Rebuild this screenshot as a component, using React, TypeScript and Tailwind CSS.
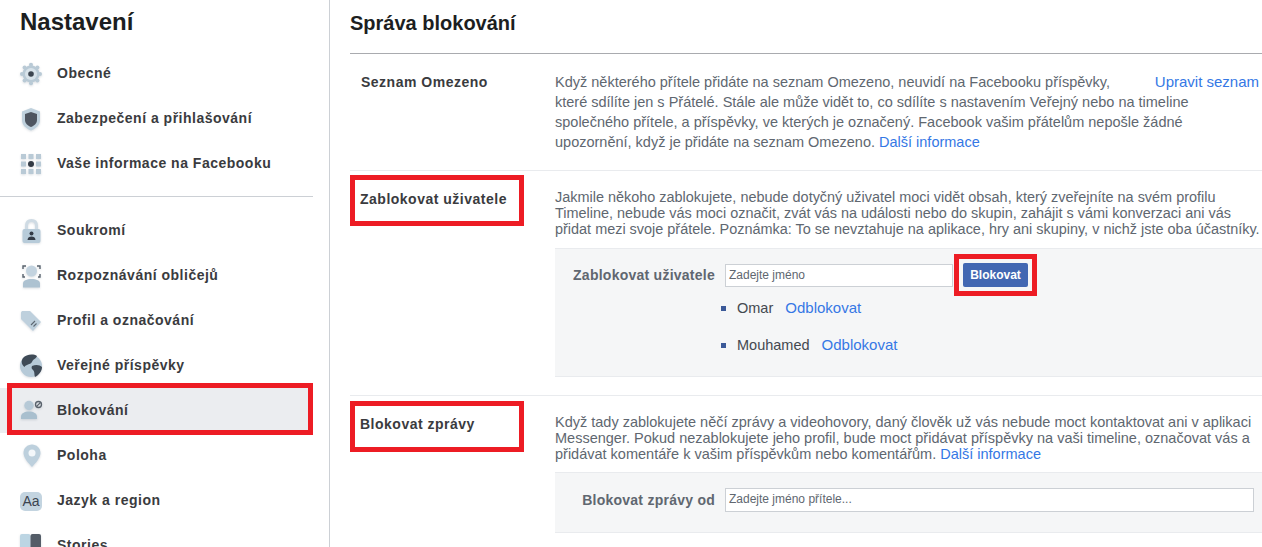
import type { ReactNode } from "react"

function Icon({ children }: { children: ReactNode }) {
  return (
    <svg width="26" height="26" viewBox="0 0 26 26" className="shrink-0 drop-shadow-[0_1px_1px_rgba(70,90,110,0.2)]">
      {children}
    </svg>
  )
}

const GearIcon = () => (
  <Icon>
    <g fill="#b9cad6">
      <circle cx="13" cy="13" r="8.5" />
      <circle cx="13" cy="3.8" r="2" />
      <circle cx="13" cy="22.2" r="2" />
      <circle cx="4" cy="13" r="2" />
      <circle cx="22" cy="13" r="2" />
      <circle cx="6.6" cy="6.6" r="2" />
      <circle cx="19.4" cy="6.6" r="2" />
      <circle cx="6.6" cy="19.4" r="2" />
      <circle cx="19.4" cy="19.4" r="2" />
    </g>
    <circle cx="13" cy="13" r="6" fill="#d8e3ea" />
    <circle cx="13" cy="13" r="2.8" fill="#3c4550" />
  </Icon>
)

const ShieldIcon = () => (
  <Icon>
    <path d="M13 2 L22 5.5 V14 C22 19 18 22.5 13 24.5 C8 22.5 4 19 4 14 V5.5 Z" fill="#bfd1dd" />
    <path d="M13 6 L19 8 V14 C19 17.5 16.5 19.5 13 21 C9.5 19.5 7 17.5 7 14 V8 Z" fill="#4e5560" />
  </Icon>
)

const GridIcon = () => (
  <Icon>
    <g fill="#b9cad6">
      <rect x="3" y="3" width="5" height="5" />
      <rect x="10.5" y="3" width="5" height="5" />
      <rect x="18" y="3" width="5" height="5" />
      <rect x="3" y="10.5" width="5" height="5" />
      <rect x="18" y="10.5" width="5" height="5" />
      <rect x="3" y="18" width="5" height="5" />
      <rect x="10.5" y="18" width="5" height="5" />
      <rect x="18" y="18" width="5" height="5" />
    </g>
    <circle cx="13" cy="13" r="3" fill="#343b45" />
  </Icon>
)

const LockIcon = () => (
  <Icon>
    <path d="M8.5 12 V8 C8.5 4.5 10.5 2.5 13.5 2.5 C16.5 2.5 18.5 4.5 18.5 8 V12" fill="none" stroke="#cfdbe4" strokeWidth="3" />
    <rect x="4.5" y="11" width="18" height="14" rx="2" fill="#b7cbd9" />
    <circle cx="13.5" cy="15.5" r="2" fill="#333b46" />
    <path d="M9.5 22 C9.5 19.5 11.5 18.5 13.5 18.5 C15.5 18.5 17.5 19.5 17.5 22 Z" fill="#333b46" />
  </Icon>
)

const FaceIcon = () => (
  <Icon>
    <circle cx="13.5" cy="8" r="5.5" fill="#c3d3df" />
    <path d="M5 24.5 V20.5 C5 17.5 8.5 16 13.5 16 C18.5 16 22 17.5 22 20.5 V24.5 Z" fill="#adc2d1" />
    <path d="M5 6 V3 H8 M19 3 H22 V6 M5 11 V14 H7 M22 11 V14 H20" fill="none" stroke="#59636e" strokeWidth="1.4" />
  </Icon>
)

const TagIcon = () => (
  <Icon>
    <path d="M3 5 C3 3.5 4 3 5 3 H12 L23 14 L15 23 L3 11 Z" fill="#bed0dd" />
    <path d="M13 17 L17 13 M15.5 18.5 L18.5 15.5" stroke="#5d6873" strokeWidth="1.1" />
  </Icon>
)

const GlobeIcon = () => (
  <Icon>
    <circle cx="13" cy="13" r="11" fill="#b6cad8" />
    <path d="M5 5 C8 1.5 15 0.5 19 3 C18 6 15 6 14 9 C12 12 8 11 6.5 14 C4 12 2.5 9 5 5 Z" fill="#3f4b57" />
    <path d="M14 13 C18 11 22 12 24 14 C24 18 21 22 17 24 C16 21 17 19 15 17 C14 16 13 15 14 13 Z" fill="#3f4b57" />
  </Icon>
)

const BlockIcon = () => (
  <Icon>
    <circle cx="11" cy="7.5" r="4.7" fill="#b6c9d7" />
    <path d="M3 21 V18.5 C3 15.5 6.5 13.5 11 13.5 C15.5 13.5 19 15.5 19 18.5 V21 Z" fill="#a9bfce" />
    <circle cx="20.5" cy="6.5" r="3" fill="none" stroke="#59626c" strokeWidth="1.3" />
    <path d="M18.4 8.6 L22.6 4.4" stroke="#59626c" strokeWidth="1.3" />
  </Icon>
)

const PinIcon = () => (
  <Icon>
    <path d="M14 24 C10.5 20 5.5 15 5.5 10 C5.5 5 9.5 1.5 14 1.5 C18.5 1.5 22.5 5 22.5 10 C22.5 15 17.5 20 14 24 Z" fill="#bdd0dd" />
    <circle cx="14" cy="10" r="3.5" fill="#f3f7fa" />
  </Icon>
)

const LangIcon = () => (
  <div className="flex items-start w-[26px] h-[26px] shrink-0 pt-[4px] pl-[2px]">
    <div className="w-[22px] h-[19px] rounded-[5px] bg-[#c3d4e0] text-[#3b4450] text-[14px] leading-[18px] text-center">Aa</div>
  </div>
)

const BookIcon = () => (
  <Icon>
    <rect x="2" y="1" width="10.5" height="25" rx="2" fill="#bcd5e3" />
    <rect x="12.5" y="1" width="10.5" height="25" rx="2" fill="#545d68" />
  </Icon>
)

function NavItem({ icon, label }: { icon: ReactNode; label: string }) {
  return (
    <div className="flex items-center h-[45px] pl-[18px] gap-[13px]">
      {icon}
      <span className="text-[14px] font-bold tracking-[0.5px] text-[#3a3b3e]">{label}</span>
    </div>
  )
}

function Link({ children }: { children: ReactNode }) {
  return <a className="text-[#3578e5]">{children}</a>
}

// red annotation frames drawn over the page
function Frame({ className }: { className: string }) {
  return <div className={`absolute border-[5px] border-[#ed1c24] pointer-events-none ${className}`} />
}

export default function App() {
  return (
    <div className="relative flex h-[547px] w-[1262px] overflow-hidden bg-white font-['Liberation_Sans',Arial,sans-serif]">
      <aside className="w-[330px] shrink-0 border-r border-[#ccd0d5]">
        <h1 className="pl-[20px] pt-[7px] h-[51px] text-[24px] leading-[30px] font-bold text-[#1c1e21]">Nastavení</h1>
        <NavItem icon={<GearIcon />} label="Obecné" />
        <NavItem icon={<ShieldIcon />} label="Zabezpečení a přihlašování" />
        <NavItem icon={<GridIcon />} label="Vaše informace na Facebooku" />
        <div className="mt-[10px] mb-[11px] mr-[16px] border-t border-[#ccd0d5]" />
        <NavItem icon={<LockIcon />} label="Soukromí" />
        <NavItem icon={<FaceIcon />} label="Rozpoznávání obličejů" />
        <NavItem icon={<TagIcon />} label="Profil a označování" />
        <NavItem icon={<GlobeIcon />} label="Veřejné příspěvky" />
        <div className="bg-[#ebedf0] mr-[16px]">
          <NavItem icon={<BlockIcon />} label="Blokování" />
        </div>
        <NavItem icon={<PinIcon />} label="Poloha" />
        <NavItem icon={<LangIcon />} label="Jazyk a region" />
        <NavItem icon={<BookIcon />} label="Stories" />
      </aside>

      <main className="flex-1 pl-[20px] min-w-0">
        <h2 className="h-[54px] pt-[9px] text-[20px] leading-[28px] font-bold text-[#1c1e21] border-b border-[#a9abaf]">Správa blokování</h2>

        <section className="flex h-[117px] border-b border-[#e9ebee] pt-[18px]">
          <h3 className="w-[205px] shrink-0 pl-[11px] text-[14px] leading-[20px] font-bold tracking-[0.5px] text-[#3a3b3e]">Seznam Omezeno</h3>
          <div className="relative flex-1 text-[14.5px] leading-[20px] text-[#606770]">
            <span className="absolute right-[3px] top-0 text-[15px]"><Link>Upravit seznam</Link></span>
            <p className="whitespace-nowrap">
              Když některého přítele přidáte na seznam Omezeno, neuvidí na Facebooku příspěvky,<br />
              které sdílíte jen s Přátelé. Stále ale může vidět to, co sdílíte s nastavením Veřejný nebo na timeline<br />
              společného přítele, a příspěvky, ve kterých je označený. Facebook vašim přátelům nepošle žádné<br />
              upozornění, když je přidáte na seznam Omezeno. <Link>Další informace</Link>
            </p>
          </div>
        </section>

        <section className="flex h-[225px] border-b border-[#e9ebee] pt-[18px]">
          <h3 className="w-[205px] shrink-0 pl-[10px] text-[14px] leading-[20px] font-bold tracking-[0.5px] text-[#3a3b3e]">Zablokovat uživatele</h3>
          <div className="flex-1 min-w-0">
            <p className="text-[14.45px] leading-[16px] text-[#606770] whitespace-nowrap">
              Jakmile někoho zablokujete, nebude dotyčný uživatel moci vidět obsah, který zveřejníte na svém profilu<br />
              Timeline, nebude vás moci označit, zvát vás na události nebo do skupin, zahájit s vámi konverzaci ani vás<br />
              přidat mezi svoje přátele. Poznámka: To se nevztahuje na aplikace, hry ani skupiny, v nichž jste oba účastníky.
            </p>
            <div className="mt-[11px] h-[129px] bg-[#f5f6f7] border-y border-[#e9ebee] pt-[14px]">
              <div className="flex items-center h-[24px]">
                <span className="w-[170px] pr-[10px] text-right text-[14px] font-bold tracking-[0.25px] text-[#606770]">Zablokovat uživatele</span>
                <div className="w-[228px] h-[23px] bg-white border border-[#ccd0d5] pl-[3px] text-[12px] leading-[20px] text-[#606770]">Zadejte jméno</div>
                <button className="ml-[10px] h-[24px] w-[65px] bg-[#4267b2] rounded-[2px] text-white text-[12px] font-bold">Blokovat</button>
              </div>
              <ul className="mt-[11px] ml-[166px] text-[14.5px] leading-[20px]">
                <li className="flex items-center h-[20px] gap-[11px] text-[#444950]">
                  <span className="w-[5px] h-[5px] bg-[#3b5998]" />
                  <span>Omar <span className="ml-[8px] text-[15px]"><Link>Odblokovat</Link></span></span>
                </li>
                <li className="flex items-center h-[20px] gap-[11px] mt-[17px] text-[#444950]">
                  <span className="w-[5px] h-[5px] bg-[#3b5998]" />
                  <span>Mouhamed <span className="ml-[8px] text-[15px]"><Link>Odblokovat</Link></span></span>
                </li>
              </ul>
            </div>
          </div>
        </section>

        <section className="flex pt-[18px]">
          <h3 className="w-[205px] shrink-0 pl-[10px] text-[14px] leading-[20px] font-bold tracking-[0.5px] text-[#3a3b3e]">Blokovat zprávy</h3>
          <div className="flex-1 min-w-0">
            <p className="text-[14.5px] leading-[16px] text-[#606770] whitespace-nowrap">
              Když tady zablokujete něčí zprávy a videohovory, daný člověk už vás nebude moct kontaktovat ani v aplikaci<br />
              Messenger. Pokud nezablokujete jeho profil, bude moct přidávat příspěvky na vaši timeline, označovat vás a<br />
              přidávat komentáře k vašim příspěvkům nebo komentářům. <Link>Další informace</Link>
            </p>
            <div className="mt-[10px] h-[61px] bg-[#f5f6f7] border-y border-[#e9ebee] pt-[15px]">
              <div className="flex items-center">
                <span className="w-[170px] pr-[10px] text-right text-[14px] font-bold tracking-[0.25px] text-[#606770]">Blokovat zprávy od</span>
                <div className="w-[529px] h-[24px] bg-white border border-[#ccd0d5] pl-[3px] text-[12px] leading-[21px] text-[#606770]">Zadejte jméno přítele...</div>
              </div>
            </div>
          </div>
        </section>
      </main>

      <Frame className="left-[7px] top-[383px] w-[306px] h-[52px]" />
      <Frame className="left-[350px] top-[175px] w-[174px] h-[51px]" />
      <Frame className="left-[954px] top-[254px] w-[83px] h-[42px]" />
      <Frame className="left-[350px] top-[401px] w-[174px] h-[51px]" />
    </div>
  )
}
